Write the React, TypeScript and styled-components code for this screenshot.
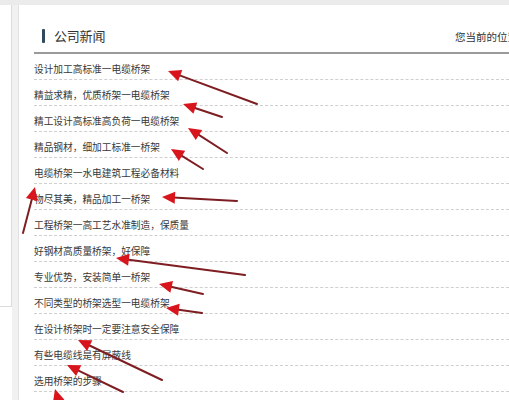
import React from 'react'
import styled, { createGlobalStyle } from 'styled-components'

const GlobalStyle = createGlobalStyle`
  html, body {
    margin: 0;
    padding: 0;
    background: #ffffff;
    overflow: hidden;
  }
  body {
    font-family: 'Noto Sans CJK SC', 'Noto Sans', sans-serif;
    color: #333;
  }
`

const Page = styled.div`
  position: relative;
  width: 509px;
  height: 400px;
  overflow: hidden;
  display: flex;
  flex-direction: column;
`

const TopStrip = styled.div`
  height: 5px;
  background: #ebebeb;
  flex-shrink: 0;
`

const Body = styled.div`
  display: flex;
  flex: 1;
  min-height: 0;
`

const Sidebar = styled.aside`
  width: 11px;
  height: 301px;
  flex-shrink: 0;
  background: #fff;
  border-right: 1px solid #dcdcdc;
  border-bottom: 1px solid #dcdcdc;
`

const Gutter = styled.div`
  width: 6px;
  flex-shrink: 0;
  background: #f1f1f1;
`

const Main = styled.main`
  flex: 1;
  min-width: 0;
  border-left: 1px solid #e2e2e2;
  padding-left: 15px;
  background: #fff;
`

const Header = styled.div`
  display: flex;
  align-items: center;
  height: 49px;
  padding-top: 14px;
  border-bottom: 2px solid #9a9a9a;
  box-sizing: border-box;
`

const TitleBox = styled.div`
  flex: 0 0 421px;
  display: flex;
  align-items: center;
  gap: 9px;
  padding-left: 8px;
  box-sizing: border-box;
`

const TitleBar = styled.span`
  width: 3px;
  height: 14px;
  background: #2e4a5c;
  border-radius: 1px;
`

const Title = styled.h2`
  margin: 0;
  font-size: 13px;
  font-weight: 400;
  color: #333;
  letter-spacing: -0.2px;
`

const Location = styled.div`
  white-space: nowrap;
  font-size: 10.5px;
  color: #333;
  margin-top: 1px;
`

const NewsList = styled.ul`
  list-style: none;
  margin: 0;
  padding: 0;
`

const NewsItem = styled.li`
  height: 26px;
  display: flex;
  align-items: center;
  padding-top: 4px;
  box-sizing: border-box;
  border-bottom: 1px dashed #cfcfcf;
  font-size: 9.7px;
  color: #383838;
  white-space: nowrap;
`

const Overlay = styled.svg`
  position: absolute;
  left: 0;
  top: 0;
  pointer-events: none;
`

const news = [
  '设计加工高标准一电缆桥架',
  '精益求精，优质桥架一电缆桥架',
  '精工设计高标准高负荷一电缆桥架',
  '精品钢材，细加工标准一桥架',
  '电缆桥架一水电建筑工程必备材料',
  '物尽其美，精品加工一桥架',
  '工程桥架一高工艺水准制造，保质量',
  '好钢材高质量桥架，好保障',
  '专业优势，安装简单一桥架',
  '不同类型的桥架选型一电缆桥架',
  '在设计桥架时一定要注意安全保障',
  '有些电缆线是有屏蔽线',
  '选用桥架的步骤'
]

// annotation arrows: [tailX, tailY, headX, headY]
const arrows: [number, number, number, number][] = [
  [257, 104, 168, 71],
  [222, 117, 183, 104],
  [227, 153, 188, 128],
  [203, 169, 171, 149],
  [23, 233, 35, 187],
  [237, 201, 162, 197],
  [245, 275, 116, 258],
  [203, 294, 159, 284],
  [202, 313, 166, 308],
  [162, 380, 78, 340],
  [123, 392, 67, 365],
  [64, 420, 55, 389]
]

const Arrow: React.FC<{ a: [number, number, number, number] }> = ({ a }) => {
  const [x1, y1, x2, y2] = a
  const dx = x2 - x1
  const dy = y2 - y1
  const len = Math.hypot(dx, dy)
  const ux = dx / len
  const uy = dy / len
  const headLen = 13
  const half = 6
  const bx = x2 - ux * headLen
  const by = y2 - uy * headLen
  const px = -uy * half
  const py = ux * half
  return (
    <g>
      <line x1={x1} y1={y1} x2={bx + ux * 2} y2={by + uy * 2} stroke='#7e1e22' strokeWidth={2} strokeLinecap='round' />
      <polygon points={`${x2},${y2} ${bx + px},${by + py} ${bx - px},${by - py}`} fill='#d8141c' />
    </g>
  )
}

const App: React.FC = () => {
  return (
    <>
      <GlobalStyle />
      <Page>
        <TopStrip />
        <Body>
          <Sidebar />
          <Gutter />
          <Main>
            <Header>
              <TitleBox>
                <TitleBar />
                <Title>公司新闻</Title>
              </TitleBox>
              <Location>您当前的位置：首页 &gt; 公司新闻</Location>
            </Header>
            <NewsList>
              {news.map((t) => (
                <NewsItem key={t}>{t}</NewsItem>
              ))}
            </NewsList>
          </Main>
        </Body>
        <Overlay width={509} height={400} viewBox='0 0 509 400'>
          {arrows.map((a, i) => (
            <Arrow key={i} a={a} />
          ))}
        </Overlay>
      </Page>
    </>
  )
}

export default App
